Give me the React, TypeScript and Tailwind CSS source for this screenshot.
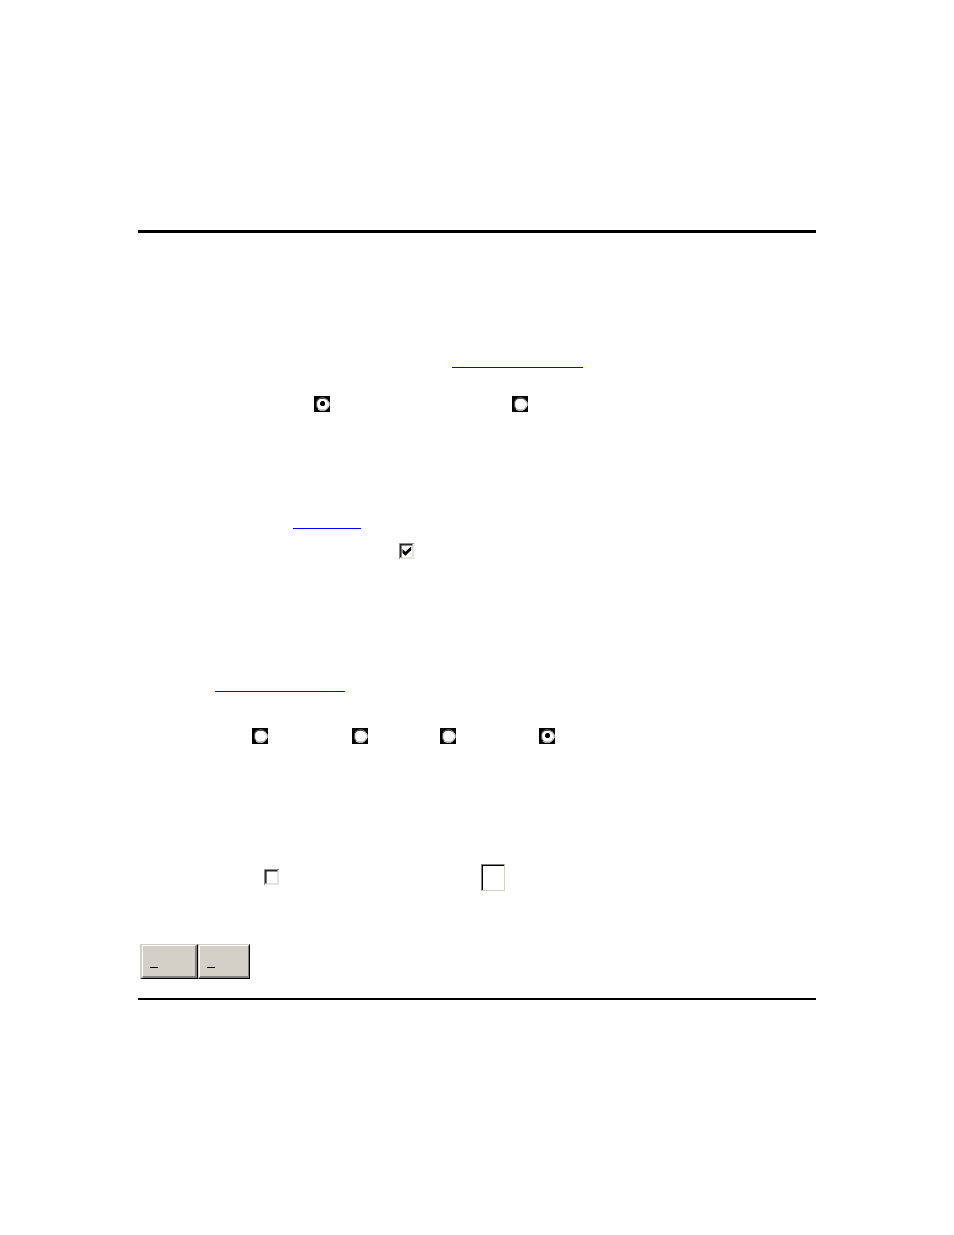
import { useState } from "react";

type RadioProps = {
  name: string;
  label: string;
  checked: boolean;
  onSelect: () => void;
  className: string;
};

function Radio({ name, label, checked, onSelect, className }: RadioProps) {
  return (
    <label className={`relative block h-4 w-4 shrink-0 ${className}`}>
      <input
        type="radio"
        name={name}
        aria-label={label}
        checked={checked}
        onChange={onSelect}
        className="block h-4 w-4 appearance-none bg-black"
      />
      <svg viewBox="0 0 16 16" className="pointer-events-none absolute inset-0 h-4 w-4" aria-hidden="true">
        <circle cx="8.5" cy="8" r="6.7" fill="#7c7c7c" />
        <path d="M3.5 11.5 2.8 9V6L4 4l2-1.5h4.5L12.5 4" fill="none" stroke="#3c3c3c" strokeWidth="0.8" />
        <path d="M6 3h5l2 1.500 1 2h1.500v3.500H14l-1.200 2.200L11 13.500H6L4 12 3.200 10V6L4 4.500Z" fill="#fff" />
        <path d="M13.5 4.5 14.800 6.500V10l-1.300 2.300L11 14.200H6L4 13" fill="none" stroke="#dcdcdc" strokeWidth="1" />
        {checked && <path d="M7.5 5H10l1 1.500v2L10 10H7.500L6 8.500v-2Z" fill="#000" />}
      </svg>
    </label>
  );
}

type CheckProps = { label: string; initial: boolean; className: string };

function Check({ label, initial, className }: CheckProps) {
  const [checked, setChecked] = useState(initial);
  return (
    <label className={`relative block h-4 w-[15px] shrink-0 ${className}`}>
      <input
        type="checkbox"
        aria-label={label}
        checked={checked}
        onChange={(e) => setChecked(e.target.checked)}
        className="block h-4 w-[15px] appearance-none bg-white"
      />
      <svg viewBox="0 0 15 16" className="pointer-events-none absolute inset-0 h-4 w-[15px]" aria-hidden="true">
        <path d="M2 15H14V2" fill="none" stroke="#e6e4e0" strokeWidth="2" />
        <path d="M0.5 16V.5H15" fill="none" stroke="#8c8c8c" />
        <path d="M1.8 14.5V1.8H13.5" fill="none" stroke="#282828" strokeWidth="1.6" />
        {checked && <path d="M3.500 6 6.300 8.800 12.200 3.500v3.800L6.300 12.800 3.500 10Z" fill="#000" />}
      </svg>
    </label>
  );
}

export default function App() {
  const [first, setFirst] = useState(0);
  const [second, setSecond] = useState(3);

  return (
    <main className="min-h-screen bg-white px-[138px] pt-[230px] font-['Liberation_Sans',sans-serif]">
      <form onSubmit={(e) => e.preventDefault()}>
        <hr className="h-[3px] border-0 bg-black" />
        <div className="flex pt-[116px]">
          <a href="#first-group" aria-label="First group" className="ml-[314px] h-[19px] w-[131px] border-b border-[#0000ff]" />
        </div>
        <fieldset id="first-group" className="flex pt-7">
          <Radio name="first" label="First choice" checked={first === 0} onSelect={() => setFirst(0)} className="ml-[176px]" />
          <Radio name="first" label="Second choice" checked={first === 1} onSelect={() => setFirst(1)} className="ml-[182px]" />
        </fieldset>
        <div className="flex pt-[98px]">
          <a href="#option" aria-label="Option" className="ml-[155px] h-[19px] w-[68px] border-b border-[#0000ff]" />
        </div>
        <div id="option" className="flex pt-[14px]">
          <Check label="Enable option" initial={true} className="ml-[261px]" />
        </div>
        <div className="flex pt-[114px]">
          <a href="#second-group" aria-label="Second group" className="ml-[77px] h-[19px] w-[130px] border-b border-[#0000ff]" />
        </div>
        <fieldset id="second-group" className="flex pt-9">
          <Radio name="second" label="First choice" checked={second === 0} onSelect={() => setSecond(0)} className="ml-[114px]" />
          <Radio name="second" label="Second choice" checked={second === 1} onSelect={() => setSecond(1)} className="ml-[84px]" />
          <Radio name="second" label="Third choice" checked={second === 2} onSelect={() => setSecond(2)} className="ml-[72px]" />
          <Radio name="second" label="Fourth choice" checked={second === 3} onSelect={() => setSecond(3)} className="ml-[83px]" />
        </fieldset>
        <div className="flex items-start pt-[120px]">
          <div className="pt-[5px]">
            <Check label="Use value" initial={false} className="ml-[126px]" />
          </div>
          <div className="ml-[202px] h-[27px] w-6 border border-b-[#d4d0c8] border-l-[#808080] border-r-[#d4d0c8] border-t-[#808080]">
            <input
              type="text"
              aria-label="Value"
              className="block h-full w-full border-l border-t border-black bg-white text-center text-xs outline-none"
            />
          </div>
        </div>
        <div className="flex pl-[2px] pt-[53px]">
          <button
            type="submit"
            aria-label="Submit"
            className="h-[35px] w-[58px] border-b border-l-2 border-r border-t border-b-black border-l-[#d4d0c8] border-r-black border-t-[#d4d0c8]"
          >
            <span className="block h-full border-b-2 border-l border-r-2 border-t border-b-[#808080] border-l-white border-r-[#808080] border-t-white bg-[#d4d0c8] pl-[7px] pt-[21px]">
              <span className="block h-px w-2 bg-black" />
            </span>
          </button>
          <button
            type="reset"
            aria-label="Reset"
            className="h-[35px] w-[52px] border border-b-black border-l-[#d4d0c8] border-r-black border-t-[#d4d0c8]"
          >
            <span className="block h-full border-b-2 border-l border-r border-t border-b-[#808080] border-l-white border-r-[#808080] border-t-white bg-[#d4d0c8] pl-[7px] pt-[21px]">
              <span className="block h-px w-2 bg-black" />
            </span>
          </button>
        </div>
        <hr className="mt-[19px] h-[2px] border-0 bg-black" />
      </form>
    </main>
  );
}
